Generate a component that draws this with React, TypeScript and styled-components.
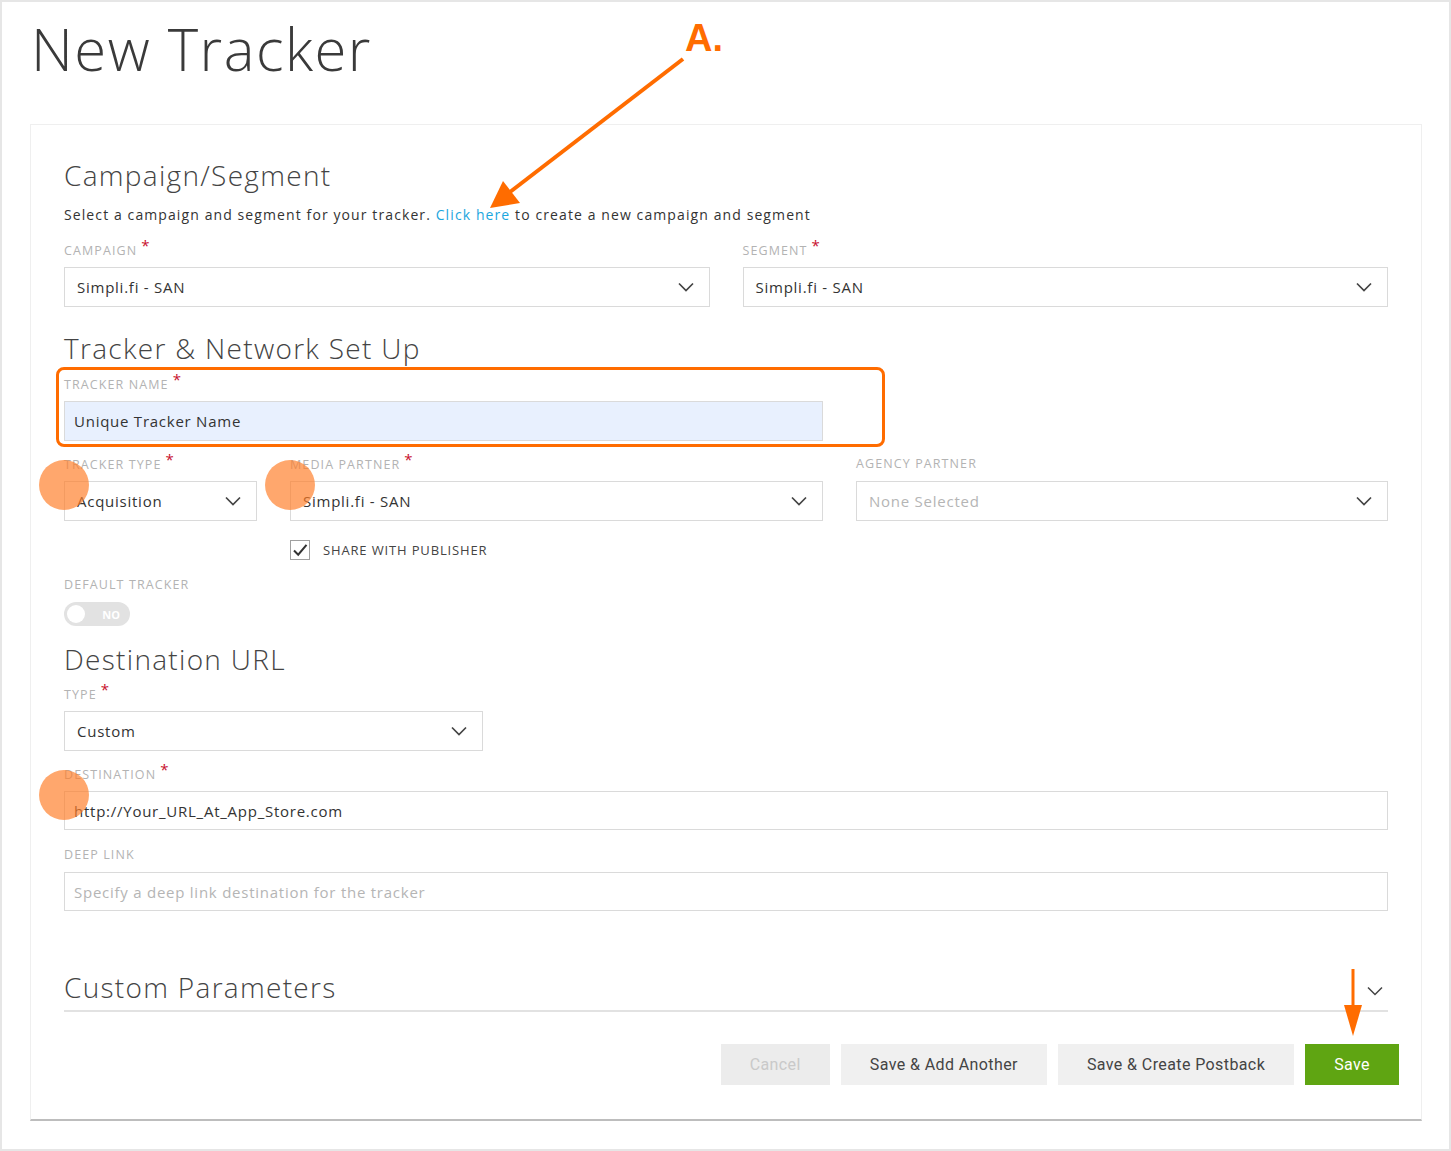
import React from "react";
import styled, { createGlobalStyle } from "styled-components";

const GlobalStyle = createGlobalStyle`
  * { box-sizing: border-box; }
  body {
    margin: 0;
    background: #fff;
    font-family: "Open Sans", "Noto Sans", Arial, sans-serif;
    color: #333;
  }
`;

const Frame = styled.div`
  position: relative;
  width: 1451px;
  height: 1151px;
  border: 2px solid #e6e6e6;
  padding: 0 27px 0 28px;
  overflow: hidden;
`;

const PageTitle = styled.h1`
  margin: 11px 0 0 1px;
  font-size: 58px;
  font-weight: 300;
  line-height: 72px;
  letter-spacing: 1.5px;
  color: #3a3a3a;
`;

const Card = styled.div`
  margin-top: 39px;
  width: 1392px;
  height: 997px;
  border: 1px solid #efefef;
  border-bottom: 2px solid #bdbdbd;
  padding: 30px 33px 0 33px;
`;

const SectionTitle = styled.h2<{ $gap?: number }>`
  margin: 0;
  font-size: 28px;
  font-weight: 300;
  line-height: 40px;
  letter-spacing: 1.3px;
  color: #444;
  margin-top: ${(p) => p.$gap ?? 0}px;
`;

const Intro = styled.p`
  margin: 10px 0 0;
  font-size: 14px;
  line-height: 20px;
  letter-spacing: 1.1px;
  color: #333;
`;

const Link = styled.a`
  color: #1ba6de;
  text-decoration: none;
`;

const Row = styled.div<{ $cols: string; $gap?: number }>`
  display: grid;
  grid-template-columns: ${(p) => p.$cols};
  column-gap: 33px;
  margin-top: ${(p) => p.$gap ?? 0}px;
`;

const Field = styled.div<{ $gap?: number }>`
  display: flex;
  flex-direction: column;
  margin-top: ${(p) => p.$gap ?? 0}px;
`;

const Label = styled.label`
  display: block;
  height: 17px;
  margin-bottom: 9px;
  font-size: 12.5px;
  line-height: 17px;
  letter-spacing: 1.1px;
  text-transform: uppercase;
  color: #b3b3b3;
`;

const Req = styled.span`
  position: relative;
  top: -4px;
  margin-left: 4px;
  font-size: 15px;
  color: #c8102e;
`;

const Box = styled.div<{ $fill?: string; $muted?: boolean; $width?: string }>`
  display: flex;
  align-items: center;
  justify-content: space-between;
  height: 40px;
  width: ${(p) => p.$width ?? "100%"};
  padding: 0 15px 0 12px;
  border: 1px solid #dadada;
  background: ${(p) => p.$fill ?? "#fff"};
  font-size: 15px;
  letter-spacing: 0.75px;
  color: ${(p) => (p.$muted ? "#b5b5b5" : "#333")};
`;

const InputBox = styled(Box)<{ $tall?: boolean }>`
  padding-left: 9px;
  height: ${(p) => (p.$tall ? 40 : 39)}px;
`;

const Chevron = () => (
  <svg width="16" height="10" viewBox="0 0 16 10" fill="none">
    <path d="M1 1.5l7 7 7-7" stroke="#444" strokeWidth="1.7" />
  </svg>
);

function Select({ value, muted, width }: { value: string; muted?: boolean; width?: string }) {
  return (
    <Box $muted={muted} $width={width}>
      <span>{value}</span>
      <Chevron />
    </Box>
  );
}

const Highlight = styled.div`
  margin: -1px 0 0 -8px;
  width: 829px;
  height: 80px;
  border: 3px solid #ff6c00;
  border-radius: 8px;
  padding: 5px 0 0 5px;
`;

const CheckRow = styled.label`
  display: flex;
  align-items: center;
  gap: 13px;
  margin-top: 19px;
  font-size: 13px;
  letter-spacing: 0.85px;
  color: #444;
`;

const CheckBox = styled.span`
  display: flex;
  align-items: center;
  justify-content: center;
  width: 20px;
  height: 20px;
  border: 1.5px solid #a0a0a0;
  background: #fff;
`;

const Toggle = styled.div`
  display: flex;
  align-items: center;
  justify-content: space-between;
  width: 66px;
  height: 24px;
  border-radius: 12px;
  background: #e2e2e2;
  padding: 0 10px 0 3px;
  font-size: 11px;
  font-weight: 700;
  color: #fff;
`;

const Knob = styled.span`
  width: 18px;
  height: 18px;
  border-radius: 50%;
  background: #fff;
`;

const Collapse = styled.div`
  display: flex;
  align-items: center;
  justify-content: space-between;
  margin-top: 56px;
  padding-bottom: 3px;
  border-bottom: 2px solid #e2e2e2;
  width: 1324px;
`;

const CollapseIcon = styled.svg`
  margin: 8px 5px 0 0;
`;

const Actions = styled.div`
  display: flex;
  justify-content: flex-end;
  gap: 11px;
  margin-top: 32px;
  margin-right: -11px;
`;

const Button = styled.button<{ $kind?: "primary" | "disabled" }>`
  height: 41px;
  padding: 0 29px;
  border: none;
  font-family: Roboto, "Liberation Sans", Arial, sans-serif;
  font-size: 16px;
  letter-spacing: 0.4px;
  background: ${(p) =>
    p.$kind === "primary" ? "#5fa512" : p.$kind === "disabled" ? "#ececec" : "#f0f0f0"};
  color: ${(p) =>
    p.$kind === "primary" ? "#fff" : p.$kind === "disabled" ? "#c9c9c9" : "#444"};
`;

const Spot = styled.span<{ $x: number; $y: number }>`
  position: absolute;
  left: ${(p) => p.$x - 27}px;
  top: ${(p) => p.$y - 27}px;
  width: 50px;
  height: 50px;
  border-radius: 50%;
  background: rgba(255, 126, 40, 0.68);
`;

const Marker = styled.span`
  position: absolute;
  left: 683px;
  top: 15px;
  font-family: "Liberation Sans", Arial, sans-serif;
  font-weight: 700;
  font-size: 38px;
  color: #ff6c00;
`;

const Overlay = styled.svg`
  position: absolute;
  left: -2px;
  top: -2px;
  pointer-events: none;
`;

export default function App() {
  return (
    <>
      <GlobalStyle />
      <Frame>
        <PageTitle>New Tracker</PageTitle>
        <Card>
          <SectionTitle>Campaign/Segment</SectionTitle>
          <Intro>
            Select a campaign and segment for your tracker. <Link>Click here</Link> to create a new
            campaign and segment
          </Intro>
          <Row $cols="1fr 1fr" $gap={16}>
            <Field>
              <Label>
                Campaign<Req>*</Req>
              </Label>
              <Select value="Simpli.fi - SAN" />
            </Field>
            <Field>
              <Label>
                Segment<Req>*</Req>
              </Label>
              <Select value="Simpli.fi - SAN" />
            </Field>
          </Row>

          <SectionTitle $gap={21}>Tracker &amp; Network Set Up</SectionTitle>
          <Highlight>
            <Label>
              Tracker Name<Req>*</Req>
            </Label>
            <InputBox $fill="#e8f0fe" $width="759px" $tall>
              Unique Tracker Name
            </InputBox>
          </Highlight>

          <Row $cols="193px 533px 1fr" $gap={8}>
            <Field>
              <Label>
                Tracker Type<Req>*</Req>
              </Label>
              <Select value="Acquisition" />
            </Field>
            <Field>
              <Label>
                Media Partner<Req>*</Req>
              </Label>
              <Select value="Simpli.fi - SAN" />
              <CheckRow>
                <CheckBox>
                  <svg width="16" height="14" viewBox="0 0 16 14" fill="none">
                    <path d="M2 7.5l4.2 4.2L14.5 1.8" stroke="#333" strokeWidth="2" />
                  </svg>
                </CheckBox>
                SHARE WITH PUBLISHER
              </CheckRow>
            </Field>
            <Field>
              <Label>Agency Partner</Label>
              <Select value="None Selected" muted />
            </Field>
          </Row>

          <Field $gap={16}>
            <Label>Default Tracker</Label>
            <Toggle>
              <Knob />
              NO
            </Toggle>
          </Field>

          <SectionTitle $gap={13}>Destination URL</SectionTitle>
          <Field $gap={6}>
            <Label>
              Type<Req>*</Req>
            </Label>
            <Select value="Custom" width="419px" />
          </Field>
          <Field $gap={14}>
            <Label>
              Destination<Req>*</Req>
            </Label>
            <InputBox>http://Your_URL_At_App_Store.com</InputBox>
          </Field>
          <Field $gap={16}>
            <Label>Deep Link</Label>
            <InputBox $muted>Specify a deep link destination for the tracker</InputBox>
          </Field>

          <Collapse>
            <SectionTitle>Custom Parameters</SectionTitle>
            <CollapseIcon width="16" height="10" viewBox="0 0 16 10" fill="none">
              <path d="M1 1.5l7 7 7-7" stroke="#444" strokeWidth="1.5" />
            </CollapseIcon>
          </Collapse>

          <Actions>
            <Button $kind="disabled">Cancel</Button>
            <Button>Save &amp; Add Another</Button>
            <Button>Save &amp; Create Postback</Button>
            <Button $kind="primary">Save</Button>
          </Actions>
        </Card>

        <Spot $x={64} $y={485} />
        <Spot $x={290} $y={485} />
        <Spot $x={64} $y={795} />
        <Marker>A.</Marker>
        <Overlay width="1451" height="1151" viewBox="0 0 1451 1151">
          <line x1="683" y1="59" x2="510" y2="192" stroke="#ff6c00" strokeWidth="4" />
          <polygon points="490,208 503,181 520,203" fill="#ff6c00" />
          <line x1="1353" y1="969" x2="1353" y2="1012" stroke="#ff6c00" strokeWidth="3" />
          <polygon points="1344,1005 1362,1005 1353,1036" fill="#ff6c00" />
        </Overlay>
      </Frame>
    </>
  );
}
